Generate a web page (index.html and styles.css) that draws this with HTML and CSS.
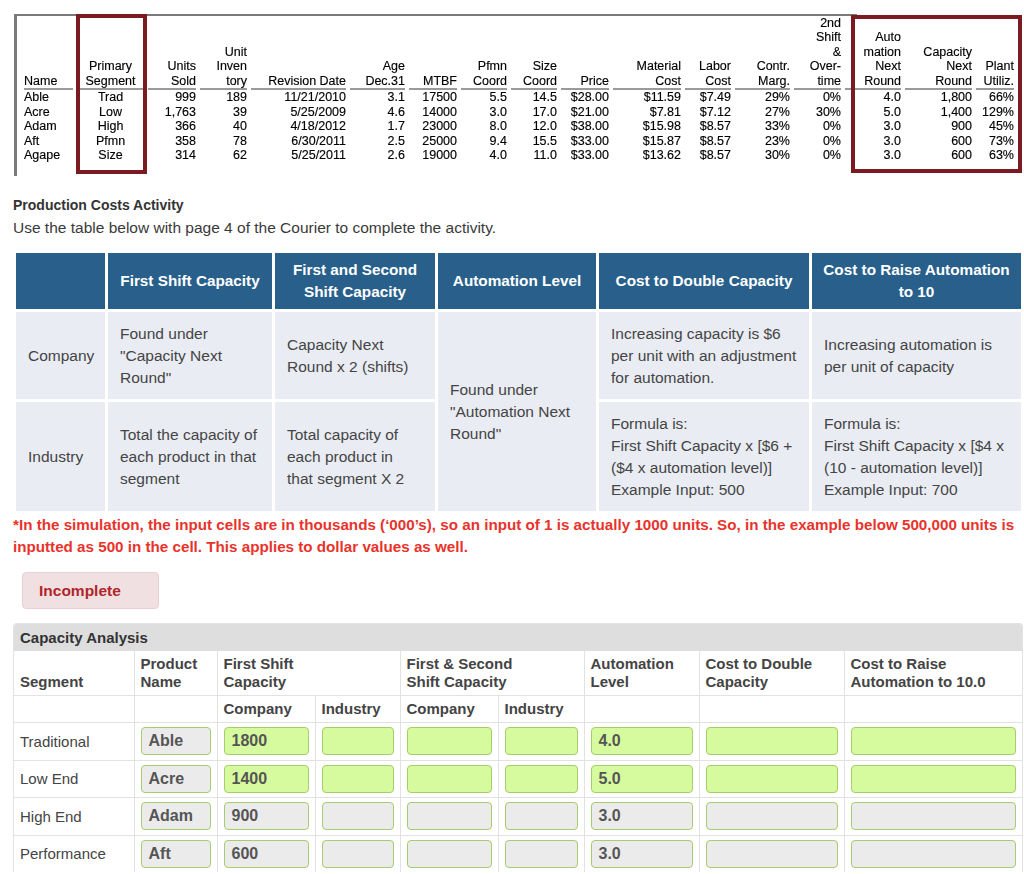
FILE: index.html
```html
<!DOCTYPE html>
<html lang="en">
<head>
<meta charset="utf-8">
<title>Production Costs Activity</title>
<link rel="stylesheet" href="styles.css">
</head>
<body>
<section class="courier">
  <div class="frame"></div>
  <table class="ct">
    <colgroup>
      <col style="width:49px"><col style="width:67px"><col style="width:48px"><col style="width:47px"><col style="width:95px"><col style="width:55px"><col style="width:48px"><col style="width:46px"><col style="width:46px"><col style="width:48px"><col style="width:68px"><col style="width:46px"><col style="width:55px"><col style="width:47px"><col style="width:56px"><col style="width:67px"><col style="width:38px">
    </colgroup>
    <thead>
      <tr>
        <th class="l">Name</th>
        <th class="c">Primary<br>Segment</th>
        <th>Units<br>Sold</th>
        <th>Unit<br>Inven<br>tory</th>
        <th>Revision Date</th>
        <th>Age<br>Dec.31</th>
        <th>MTBF</th>
        <th>Pfmn<br>Coord</th>
        <th>Size<br>Coord</th>
        <th>Price</th>
        <th>Material<br>Cost</th>
        <th>Labor<br>Cost</th>
        <th>Contr.<br>Marg.</th>
        <th>2nd<br>Shift<br>&amp;<br>Over-<br>time</th>
        <th>Auto<br>mation<br>Next<br>Round</th>
        <th>Capacity<br>Next<br>Round</th>
        <th>Plant<br>Utiliz.</th>
      </tr>
    </thead>
    <tbody>
      <tr><td class="l">Able</td><td class="c">Trad</td><td>999</td><td>189</td><td>11/21/2010</td><td>3.1</td><td>17500</td><td>5.5</td><td>14.5</td><td>$28.00</td><td>$11.59</td><td>$7.49</td><td>29%</td><td>0%</td><td>4.0</td><td>1,800</td><td>66%</td></tr>
      <tr><td class="l">Acre</td><td class="c">Low</td><td>1,763</td><td>39</td><td>5/25/2009</td><td>4.6</td><td>14000</td><td>3.0</td><td>17.0</td><td>$21.00</td><td>$7.81</td><td>$7.12</td><td>27%</td><td>30%</td><td>5.0</td><td>1,400</td><td>129%</td></tr>
      <tr><td class="l">Adam</td><td class="c">High</td><td>366</td><td>40</td><td>4/18/2012</td><td>1.7</td><td>23000</td><td>8.0</td><td>12.0</td><td>$38.00</td><td>$15.98</td><td>$8.57</td><td>33%</td><td>0%</td><td>3.0</td><td>900</td><td>45%</td></tr>
      <tr><td class="l">Aft</td><td class="c">Pfmn</td><td>358</td><td>78</td><td>6/30/2011</td><td>2.5</td><td>25000</td><td>9.4</td><td>15.5</td><td>$33.00</td><td>$15.87</td><td>$8.57</td><td>23%</td><td>0%</td><td>3.0</td><td>600</td><td>73%</td></tr>
      <tr><td class="l">Agape</td><td class="c">Size</td><td>314</td><td>62</td><td>5/25/2011</td><td>2.6</td><td>19000</td><td>4.0</td><td>11.0</td><td>$33.00</td><td>$13.62</td><td>$8.57</td><td>30%</td><td>0%</td><td>3.0</td><td>600</td><td>63%</td></tr>
    </tbody>
  </table>
  <div class="hl hl-seg"></div>
  <div class="hl hl-cap"></div>
</section>

<main class="content">
  <h2 class="title">Production Costs Activity</h2>
  <p class="sub">Use the table below with page 4 of the Courier to complete the activity.</p>

  <table class="info">
    <colgroup>
      <col class="i1"><col class="i2"><col class="i3"><col class="i4"><col class="i5"><col class="i6">
    </colgroup>
    <thead>
      <tr>
        <th></th>
        <th>First Shift Capacity</th>
        <th>First and Second Shift Capacity</th>
        <th>Automation Level</th>
        <th>Cost to Double Capacity</th>
        <th>Cost to Raise Automation to 10</th>
      </tr>
    </thead>
    <tbody>
      <tr>
        <td>Company</td>
        <td>Found under "Capacity Next Round"</td>
        <td>Capacity Next Round x 2 (shifts)</td>
        <td rowspan="2">Found under "Automation Next Round"</td>
        <td>Increasing capacity is $6 per unit with an adjustment for automation.</td>
        <td>Increasing automation is per unit of capacity</td>
      </tr>
      <tr>
        <td>Industry</td>
        <td>Total the capacity of each product in that segment</td>
        <td>Total capacity of each product in that segment X 2</td>
        <td>Formula is:<br>First Shift Capacity x [$6 + ($4 x automation level)]<br>Example Input: 500</td>
        <td>Formula is:<br>First Shift Capacity x [$4 x (10 - automation level)]<br>Example Input: 700</td>
      </tr>
    </tbody>
  </table>

  <p class="note">*In the simulation, the input cells are in thousands (‘000’s), so an input of 1 is actually 1000 units. So, in the example below 500,000 units is inputted as 500 in the cell. This applies to dollar values as well.</p>

  <div class="badge">Incomplete</div>

  <div class="panel">
    <div class="panel-title">Capacity Analysis</div>
    <table class="cap">
      <colgroup>
        <col class="k1"><col class="k2"><col class="k3"><col class="k4"><col class="k5"><col class="k6"><col class="k7"><col class="k8"><col class="k9">
      </colgroup>
      <thead>
        <tr class="h1">
          <th>Segment</th>
          <th>Product<br>Name</th>
          <th colspan="2">First Shift<br>Capacity</th>
          <th colspan="2">First &amp; Second<br>Shift Capacity</th>
          <th>Automation<br>Level</th>
          <th>Cost to Double<br>Capacity</th>
          <th>Cost to Raise<br>Automation to 10.0</th>
        </tr>
        <tr class="h2">
          <th></th><th></th><th>Company</th><th>Industry</th><th>Company</th><th>Industry</th><th></th><th></th><th></th>
        </tr>
      </thead>
      <tbody>
        <tr>
          <td class="seg">Traditional</td>
          <td><div class="box grey">Able</div></td>
          <td><div class="box">1800</div></td>
          <td><div class="box"></div></td>
          <td><div class="box"></div></td>
          <td><div class="box"></div></td>
          <td><div class="box">4.0</div></td>
          <td><div class="box"></div></td>
          <td><div class="box"></div></td>
        </tr>
        <tr>
          <td class="seg">Low End</td>
          <td><div class="box grey">Acre</div></td>
          <td><div class="box">1400</div></td>
          <td><div class="box"></div></td>
          <td><div class="box"></div></td>
          <td><div class="box"></div></td>
          <td><div class="box">5.0</div></td>
          <td><div class="box"></div></td>
          <td><div class="box"></div></td>
        </tr>
        <tr>
          <td class="seg">High End</td>
          <td><div class="box grey">Adam</div></td>
          <td><div class="box grey">900</div></td>
          <td><div class="box grey"></div></td>
          <td><div class="box grey"></div></td>
          <td><div class="box grey"></div></td>
          <td><div class="box grey">3.0</div></td>
          <td><div class="box grey"></div></td>
          <td><div class="box grey"></div></td>
        </tr>
        <tr>
          <td class="seg">Performance</td>
          <td><div class="box grey">Aft</div></td>
          <td><div class="box grey">600</div></td>
          <td><div class="box grey"></div></td>
          <td><div class="box grey"></div></td>
          <td><div class="box grey"></div></td>
          <td><div class="box grey">3.0</div></td>
          <td><div class="box grey"></div></td>
          <td><div class="box grey"></div></td>
        </tr>
      </tbody>
    </table>
  </div>
</main>
</body>
</html>
```

FILE: styles.css
```css
html, body {
  margin: 0;
  padding: 0;
  background: #fff;
}
body {
  font-family: "Liberation Sans", Arial, Helvetica, sans-serif;
  color: #333;
  overflow: hidden;
}

/* ---------- Courier excerpt ---------- */
.courier {
  position: relative;
  box-sizing: border-box;
  height: 180px;
  padding-top: 15.5px;
}
.frame {
  position: absolute;
  left: 14px;
  top: 14px;
  width: 840px;
  height: 160px;
  border-top: 2px solid #7a7a7a;
  border-left: 3px solid #7a7a7a;
  filter: blur(0.4px);
}
.ct {
  margin: 0 0 0 20px;
  border-collapse: separate;
  border-spacing: 4px 0;
  table-layout: fixed;
  width: 998px;
  font-size: 12.5px;
  line-height: 14.5px;
  color: #000;
  filter: blur(0.3px);
  -webkit-text-stroke: 0.15px #000;
}
.ct th {
  font-weight: normal;
  text-align: right;
  vertical-align: bottom;
  padding: 0;
  border-bottom: 2px solid #9a9a9a;
  white-space: nowrap;
}
.ct td {
  text-align: right;
  padding: 0;
  white-space: nowrap;
}
.ct .l { text-align: left; }
.ct .c { text-align: center; }
.hl {
  position: absolute;
  box-sizing: border-box;
  border: 4px solid #7c1a21;
}
.hl-seg {
  left: 76px;
  top: 14px;
  width: 71px;
  height: 160px;
}
.hl-cap {
  left: 851px;
  top: 15px;
  width: 171px;
  height: 158px;
}

/* ---------- Activity ---------- */
.content {
  padding-left: 13px;
}
.title {
  margin: 14px 0 0;
  font-size: 14px;
  line-height: 22px;
  font-weight: bold;
  color: #333;
}
.sub {
  margin: 1px 0 0;
  font-size: 15.5px;
  line-height: 22px;
  color: #3a3a3a;
}

.info {
  margin-top: 11px;
  border-collapse: separate;
  border-spacing: 3px;
  table-layout: fixed;
  width: 1011px;
}
.i1 { width: 89px; }
.i2 { width: 164px; }
.i3 { width: 160px; }
.i4 { width: 158px; }
.i5 { width: 210px; }
.i6 { width: 209px; }
.info th {
  background: #285f8b;
  color: #fff;
  font-size: 15.3px;
  font-weight: bold;
  line-height: 22px;
  padding: 6px 8px;
  text-align: center;
  vertical-align: middle;
}
.info td {
  background: #e9ecf3;
  color: #444;
  font-size: 15.5px;
  line-height: 22px;
  padding: 10.5px 12px 10.5px 12px;
  vertical-align: middle;
}

.note {
  margin: 0;
  width: 1011px;
  color: #e8332b;
  font-weight: bold;
  font-size: 15.2px;
  line-height: 22px;
}

.badge {
  box-sizing: border-box;
  width: 137px;
  height: 37px;
  margin: 14px 0 0 9px;
  padding-left: 16px;
  line-height: 35px;
  background: #f0e0e1;
  border: 1px solid #ebd0d3;
  border-radius: 4px;
  color: #b1262b;
  font-weight: bold;
  font-size: 15.5px;
}

.panel {
  box-sizing: border-box;
  margin-top: 14px;
  width: 1010px;
  border: 1px solid #e2e2e2;
  border-bottom: none;
  border-radius: 4px 4px 0 0;
  overflow: hidden;
}
.panel-title {
  background: #dedede;
  height: 27px;
  line-height: 28px;
  padding-left: 6px;
  font-weight: bold;
  font-size: 15px;
  color: #333;
}
.cap {
  width: 100%;
  border-collapse: collapse;
  table-layout: fixed;
}
.k1 { width: 120px; }
.k2 { width: 83px; }
.k3 { width: 98px; }
.k4 { width: 85px; }
.k5 { width: 98px; }
.k6 { width: 86px; }
.k7 { width: 115px; }
.k8 { width: 145px; }
.k9 { width: 178px; }
.cap th,
.cap td {
  border-left: 1px solid #e2e2e2;
  border-top: 1px solid #e2e2e2;
}
.cap tr > :first-child { border-left: none; }
.cap th {
  text-align: left;
  vertical-align: bottom;
  font-size: 15px;
  font-weight: bold;
  color: #444;
  line-height: 18px;
  padding: 4px 6px;
}
.cap .h1 th { border-top: none; }
.cap td {
  padding: 4px 6px 4.5px;
  vertical-align: middle;
}
.cap td.seg {
  font-size: 15px;
  color: #444;
  padding-left: 6px;
}
.box {
  box-sizing: border-box;
  height: 28px;
  line-height: 26px;
  padding: 0 7px;
  border: 1px solid #a6cd6c;
  border-radius: 4px;
  background: #d6fb9e;
  font-size: 16px;
  font-weight: bold;
  color: #555;
}
.box.grey {
  background: #ebebeb;
}
```
